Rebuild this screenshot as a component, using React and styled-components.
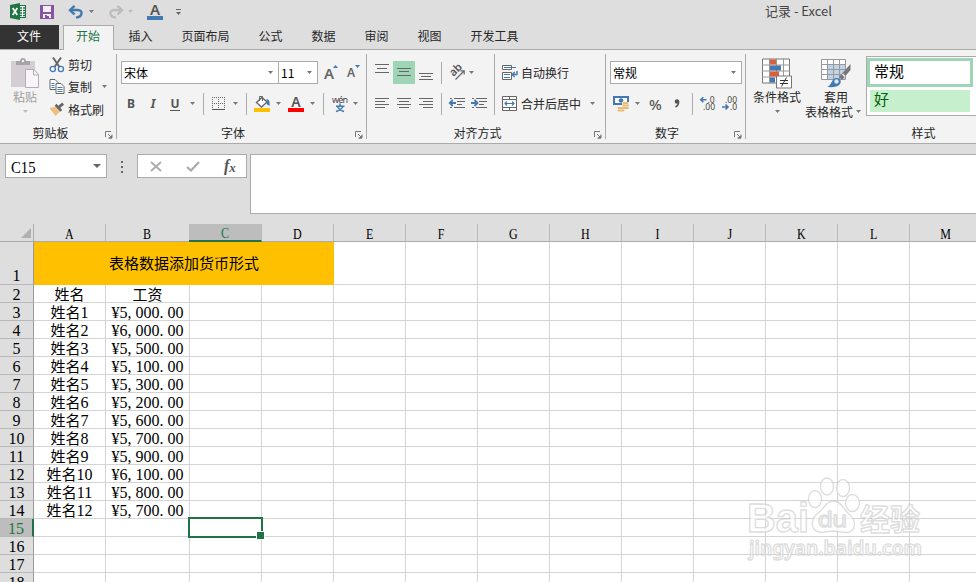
import styled, { createGlobalStyle, css } from "styled-components";

const GlobalStyle = createGlobalStyle`
  * { box-sizing: border-box; }
  body { margin: 0; overflow: hidden; }
`;

const UI = `"Noto Sans CJK SC", sans-serif`;
const SHEET = `"Liberation Serif", "Noto Sans CJK SC", serif`;

const tabs = ["插入", "页面布局", "公式", "数据", "审阅", "视图", "开发工具"];
const columns = ["A", "B", "C", "D", "E", "F", "G", "H", "I", "J", "K", "L", "M"];

const rows = [
  ["姓名", "工资"],
  ["姓名1", "¥5,000.00"],
  ["姓名2", "¥6,000.00"],
  ["姓名3", "¥5,500.00"],
  ["姓名4", "¥5,100.00"],
  ["姓名5", "¥5,300.00"],
  ["姓名6", "¥5,200.00"],
  ["姓名7", "¥5,600.00"],
  ["姓名8", "¥5,700.00"],
  ["姓名9", "¥5,900.00"],
  ["姓名10", "¥6,100.00"],
  ["姓名11", "¥5,800.00"],
  ["姓名12", "¥5,700.00"],
  ["", ""],
  ["", ""],
  ["", ""],
  ["", ""],
];

/* ---------- icons ---------- */

const ExcelIcon = () => (
  <Svg width="17" height="17" viewBox="0 0 17 17">
    <rect x="8.5" y="2.5" width="7" height="12" fill="#fff" stroke="#217346" />
    <path d="M10 5h2M13 5h2M10 7.5h2M13 7.5h2M10 10h2M13 10h2M10 12.5h2M13 12.5h2" stroke="#217346" strokeWidth="1.3" />
    <path d="M0 2L10 0V17L0 15Z" fill="#217346" />
    <path d="M2.7 5L7.3 12M7.3 5L2.7 12" stroke="#fff" strokeWidth="1.7" />
  </Svg>
);

const SaveIcon = () => (
  <Svg width="14" height="14" viewBox="0 0 14 14">
    <path d="M0 0H14V14H0Z" fill="#8653a5" />
    <path d="M3 1H11V7H3ZM3 9H11V13H9V11H7V13H3Z" fill="#f3eef6" />
    <path d="M5 10h2v3H5z" fill="#8653a5" />
  </Svg>
);

const UndoIcon = ({ color = "#4179b0", flip }) => (
  <Svg width="16" height="14" viewBox="0 0 16 14">
    <g transform={flip ? "translate(16 0) scale(-1 1)" : undefined} fill="none" stroke={color} strokeWidth="2.4">
      <path d="M6.5 0.8L2 5.2L6.5 9.3" />
      <path d="M2 5H9.5C13 5 14 7 13.4 9C13 11 11 12.3 8 12.6" />
    </g>
  </Svg>
);

const PasteIcon = () => (
  <Svg width="29" height="31" viewBox="0 0 29 31">
    <path d="M0 3H24V29H0Z" fill="#d4cdd4" />
    <path d="M5 7V3H9C9 -1 15 -1 15 3H19V7Z" fill="#a7a3a8" />
    <circle cx="12" cy="3" r="1.2" fill="#f3f3f3" />
    <path d="M14.5 11.5H23L27.5 16.5V29.5H14.5Z" fill="#f8f4f9" stroke="#b5aab8" />
    <path d="M22.5 11.5V17H27.5" fill="none" stroke="#b5aab8" />
  </Svg>
);

const CutIcon = () => (
  <Svg width="15" height="16" viewBox="0 0 15 16">
    <path d="M3.5 0.5L10 10M11.5 0.5L5 10" stroke="#666" strokeWidth="2" />
    <circle cx="3.3" cy="12" r="2.6" fill="none" stroke="#4179b0" strokeWidth="1.3" />
    <circle cx="11.4" cy="12" r="2.6" fill="none" stroke="#4179b0" strokeWidth="1.3" />
  </Svg>
);

const CopyIcon = () => (
  <Svg width="15" height="15" viewBox="0 0 15 15">
    <path d="M0.5 0.5H5.5L8.5 3.5V10.5H0.5Z" fill="#fff" stroke="#666" />
    <path d="M2 4.5h3M2 6.5h3M2 8.5h3" stroke="#4179b0" />
    <path d="M6.5 4.5H11.5L14.5 7.5V14.5H6.5Z" fill="#fff" stroke="#666" />
    <path d="M8 8.5h5M8 10.5h5M8 12.5h5" stroke="#4179b0" />
  </Svg>
);

const BrushIcon = () => (
  <Svg width="17" height="15" viewBox="0 0 17 15">
    <path d="M0.500 6L6.500 4.500L11.500 10L7 14.500Z" fill="#eec07c" />
    <path d="M6 3.500L8 1.500L14 8L12 10Z" fill="#666" />
    <path d="M10.500 5L15 1.200" stroke="#666" strokeWidth="3" />
  </Svg>
);

const BorderIcon = () => (
  <Svg width="14" height="14" viewBox="0 0 14 14">
    <path d="M0 .5H13M0 6.5H13M.5 0V13M6.5 0V13M12.5 0V13" stroke="#666" strokeDasharray="1 1" />
    <path d="M0 12.5H13" stroke="#555" />
  </Svg>
);

const FillIcon = () => (
  <Svg width="16" height="17" viewBox="0 0 16 17">
    <path d="M2.5 7.5L8 2.5L13 7L7.5 12Z" fill="#fff" stroke="#666" strokeWidth="1.3" />
    <path d="M5.5 6V1.5H8.5V6" fill="none" stroke="#666" />
    <path d="M12.5 4C15.5 4.5 16 7 15.5 11L12.5 9Z" fill="#4179b0" />
    <path d="M0 13H16V17H0Z" fill="#ffc000" />
  </Svg>
);

const PinyinIcon = () => (
  <Svg width="17" height="18" viewBox="0 0 17 18">
    <text x="0" y="8" fontFamily="Noto Sans" fontSize="9" fill="#444" textLength="16">wén</text>
    <path d="M8 8.5V11M4 11.2H12.5M5.5 11.5Q7 15 12 16.5M11 11.5Q9 15 4 16.5" fill="none" stroke="#4179b0" strokeWidth="1.5" />
  </Svg>
);

// lines: list of [x1, x2, y]
const LinesIcon = ({ lines }) => (
  <Svg width="14" height="23" viewBox="0 0 14 23">
    {lines.map(([a, b, y]) => (
      <path key={y} d={`M${a} ${y}.5H${b}`} stroke="#666" />
    ))}
  </Svg>
);

const OrientIcon = () => (
  <Svg width="17" height="16" viewBox="0 0 17 16">
    <text x="0" y="0" transform="translate(4.5 12) rotate(-45)" fontFamily="Noto Sans" fontSize="11" fontWeight="600" fill="#555">ab</text>
    <path d="M6.5 14.5L15 6M11.5 5.8H15.2V9.5" fill="none" stroke="#666" strokeWidth="1.2" />
  </Svg>
);

const IndentIcon = ({ right }) => (
  <Svg width="16" height="12" viewBox="0 0 16 12">
    <path d="M1 .5H3M5 .5H16M8 3.5H16M8 6.5H13M1 9.5H3M5 9.5H16" stroke="#666" />
    {right ? (
      <path d="M0 5H6M3.5 2L6.5 5L3.5 8" fill="none" stroke="#4179b0" strokeWidth="1.8" />
    ) : (
      <path d="M7 5H1M3.7 2L.8 5L3.7 8" fill="none" stroke="#4179b0" strokeWidth="1.8" />
    )}
  </Svg>
);

const WrapIcon = () => (
  <Svg width="16" height="16" viewBox="0 0 16 16">
    <path d="M.5 .5H9.5V4.5H.5ZM.5 7.5H9.5V14.5H.5Z" fill="#fff" stroke="#666" />
    <path d="M2 2.5H14M2 9.5H8M2 12.5H8" stroke="#4179b0" />
    <path d="M15 6V9.5H10.5M12.7 7L10.2 9.5L12.7 12" fill="none" stroke="#4179b0" strokeWidth="1.4" />
  </Svg>
);

const MergeIcon = () => (
  <Svg width="16" height="16" viewBox="0 0 16 16">
    <path d="M.5 .5H14.5V14.5H.5ZM.5 3.5H14.5M.5 11.5H14.5M7.5 .5V3.5M7.5 11.5V14.5" fill="#fff" stroke="#666" />
    <path d="M3 7.5H12M5 5.5L3 7.5L5 9.5M10 5.5L12 7.5L10 9.5" fill="none" stroke="#4179b0" strokeWidth="1.2" />
  </Svg>
);

const MoneyIcon = () => (
  <Svg width="17" height="16" viewBox="0 0 17 16">
    <path d="M1 1H15V8H1Z" fill="#fff" stroke="#4179b0" strokeWidth="2" />
    <circle cx="8" cy="4.5" r="2.3" fill="#4179b0" />
    <path d="M9 6H16V15H9Z" fill="#f3f3f3" />
    <path d="M10.5 7H14.500M10 9.5H15M10 12H15M5.500 12H9M5.500 14.5H10.500" stroke="#eabb76" strokeWidth="2" strokeLinecap="round" />
  </Svg>
);

const DecimalIcon = ({ less }) => (
  <Svg width="16" height="15" viewBox="0 0 16 15">
    <text x={less ? 3 : 7.5} y="6.5" fontFamily="Noto Sans" fontSize="8.5" fill="#444">{less ? ".00" : ".0"}</text>
    <text x={less ? 8 : 3} y="14" fontFamily="Noto Sans" fontSize="8.5" fill="#444">{less ? ".0" : ".00"}</text>
    {less ? (
      <path d="M0 11H5.5M3.5 8.5L6 11L3.5 13.5" fill="none" stroke="#4179b0" strokeWidth="1.6" />
    ) : (
      <path d="M6.5 3.8H1M3.3 1.3L.8 3.8L3.3 6.3" fill="none" stroke="#4179b0" strokeWidth="1.6" />
    )}
  </Svg>
);

const ConditionalIcon = () => (
  <Svg width="30" height="30" viewBox="0 0 30 30">
    <path d="M.5 .5H27.5V24.5H.5Z" fill="#fff" stroke="#777" />
    <path d="M0 6.5H28M0 12.5H28M0 18.5H28M7.5 0V25M14.5 0V25M21.5 0V25" stroke="#999" />
    <path d="M8 1H14V6H8ZM8 13H17V18H8Z" fill="#d9603c" />
    <path d="M8 7H19V12H8ZM8 19H13V24H8Z" fill="#4179b0" />
    <path d="M14.5 17.5H29.5V29.5H14.5Z" fill="#fff" stroke="#777" />
    <path d="M18 22H26M18 25H26M24.5 19L19.5 28" stroke="#333" />
  </Svg>
);

const TableFormatIcon = () => (
  <Svg width="30" height="29" viewBox="0 0 30 29">
    <path d="M.5 .5H24.5V20.5H.5Z" fill="#fff" />
    <path d="M7 6H24V20H7Z" fill="#bfd2e8" />
    <path d="M.5 .5H24.5V20.5H.5ZM0 5.5H25M0 10.5H25M0 15.5H25M6.5 0V21M12.5 0V21M18.5 0V21" fill="none" stroke="#999" />
    <path d="M29.5 5V11L21 21L18 18Z" fill="#777" />
    <path d="M21.5 15L24 17.5" stroke="#f3f3f3" strokeWidth="1.5" />
    <path d="M6 28C11 26.5 10 20 15 19C19 18.5 21 22 19 25C17 28 12 28.5 6 28Z" fill="#4179b0" />
    <circle cx="15.5" cy="22.5" r="2.2" fill="#dbe7f3" />
  </Svg>
);

const LauncherIcon = () => (
  <Svg width="8" height="8" viewBox="0 0 8 8">
    <path d="M.5 6V.5H6M3 3L6 6M7 3.5V7H3.5" fill="none" stroke="#777" />
    <path d="M7 4V7.5H3.5Z" fill="#777" />
  </Svg>
);

const Arrow = ({ $ml, color = "#777" }) => (
  <Item $ml={$ml} $w={5}>
    <Svg width="5" height="3" viewBox="0 0 5 3"><path d="M0 0H5L2.5 3Z" fill={color} /></Svg>
  </Item>
);

const Watermark = () => (
  <WatermarkSvg width="190" height="95" viewBox="740 475 190 95">
    <g fill="#fff" fillOpacity="0.6" stroke="#c8c8c8" strokeOpacity="0.6" strokeWidth="1.4" strokeLinejoin="round">
      <ellipse cx="815" cy="499" rx="6.5" ry="8.5" />
      <ellipse cx="827" cy="486.5" rx="6.5" ry="8.5" />
      <ellipse cx="843" cy="488" rx="6.5" ry="8.5" />
      <ellipse cx="852.5" cy="503" rx="7" ry="8.5" />
      <path d="M834 501C841 501 843 509 849 514C856 520 857 530 848 532.5C842 533 838 531 833 531C827 531 824 533 819 532C810 530 811 519 817 514C824 509 826 501 834 501Z" />
      <text x="747" y="532" fontFamily="Liberation Sans" fontWeight="700" fontSize="41" textLength="62" lengthAdjust="spacingAndGlyphs">Bai</text>
      <text x="818" y="527" fontFamily="Liberation Sans" fontWeight="400" fontSize="22" textLength="29" lengthAdjust="spacingAndGlyphs">du</text>
      <text x="860" y="530" fontFamily="Noto Sans CJK SC" fontWeight="700" fontSize="30" textLength="60">经验</text>
      <text x="749" y="555" fontFamily="Noto Sans" fontWeight="600" fontSize="20" textLength="173" lengthAdjust="spacingAndGlyphs">jingyan.baidu.com</text>
    </g>
  </WatermarkSvg>
);

/* ---------- parts ---------- */

const Group = ({ width, title, shift = 17, launcher = true, children }) => (
  <RibbonGroup $w={width}>
    {children}
    <GroupFooter $shift={shift}>
      <span>{title}</span>
      {launcher && <Launcher><LauncherIcon /></Launcher>}
    </GroupFooter>
  </RibbonGroup>
);

// punctuation takes the same advance as a digit
const Half = ({ value }) =>
  value.split(/([,.])/).map((part, i) => (i % 2 ? <Punct key={i}>{part}</Punct> : part));

const CellText = ({ value }) => (
  <span>
    {value.split(/([¥\d,.]+)/).filter(Boolean).map((part) =>
      /\d/.test(part) ? <Digits key={part}><Half value={part} /></Digits> : part
    )}
  </span>
);

export default function App() {
  return (
    <Window>
      <GlobalStyle />
      <TitleBar>
        <Item $ml={10} $w={17}><ExcelIcon /></Item>
        <Item $ml={13} $w={14}><SaveIcon /></Item>
        <Item $ml={14} $w={16}><UndoIcon /></Item>
        <Arrow $ml={5} />
        <Item $ml={14} $w={16}><UndoIcon color="#bdbdbd" flip /></Item>
        <Arrow $ml={4} color="#bdbdbd" />
        <Item $ml={14} $w={16}><FontColor $bar="#4179b0" $size={15}>A</FontColor></Item>
        <Item $ml={13} $w={5}>
          <Svg width="5" height="6" viewBox="0 0 5 6"><path d="M0 0H5V1H0ZM0 3H5L2.5 6Z" fill="#666" /></Svg>
        </Item>
        <DocTitle>记录 - Excel</DocTitle>
      </TitleBar>

      <TabBar>
        <FileTab>文件</FileTab>
        <ActiveTab>开始</ActiveTab>
        {tabs.map((t) => <Tab key={t}>{t}</Tab>)}
      </TabBar>

      <Ribbon>
        <Group width={117} title="剪贴板" shift={15}>
          <Clipboard>
            <BigButton $w={36} $muted>
              <PasteIcon />
              <Label>粘贴</Label>
              <Arrow color="#bbb" />
            </BigButton>
            <SmallButtons>
              <SmallButton><CutIcon /><Label>剪切</Label></SmallButton>
              <SmallButton><CopyIcon /><Label>复制</Label><Arrow $ml={7} /></SmallButton>
              <SmallButton><BrushIcon /><Label>格式刷</Label></SmallButton>
            </SmallButtons>
          </Clipboard>
        </Group>

        <Group width={250} title="字体">
          <ToolRow $top={7}>
            <ComboBox $ml={4} $w={158}>宋体<Arrow /></ComboBox>
            <ComboBox $ml={-1} $w={40}>11<Arrow /></ComboBox>
            <Item $ml={6} $w={14}>
              <GlyphA $size={15}>A</GlyphA>
              <Tip width="5" height="3" viewBox="0 0 5 3"><path d="M0 3H5L2.5 0Z" fill="#4179b0" /></Tip>
            </Item>
            <Item $ml={8} $w={14}>
              <GlyphA $size={12}>A</GlyphA>
              <Tip width="5" height="3" viewBox="0 0 5 3"><path d="M0 0H5L2.5 3Z" fill="#4179b0" /></Tip>
            </Item>
          </ToolRow>
          <ToolRow $top={8}>
            <Item $ml={9} $w={10}><Letter>B</Letter></Item>
            <Item $ml={12} $w={10}><Letter $italic>I</Letter></Item>
            <Item $ml={12} $w={10}><Letter $underline>U</Letter></Item>
            <Arrow $ml={10} />
            <Divider $ml={8} />
            <Item $ml={8} $w={14}><BorderIcon /></Item>
            <Arrow $ml={7} />
            <Divider $ml={8} />
            <Item $ml={7} $w={16}><FillIcon /></Item>
            <Arrow $ml={6} />
            <Item $ml={7} $w={16}><FontColor $bar="#f00" $size={14}>A</FontColor></Item>
            <Arrow $ml={6} />
            <Divider $ml={8} />
            <Item $ml={8} $w={17}><PinyinIcon /></Item>
            <Arrow $ml={4} />
          </ToolRow>
        </Group>

        <Group width={239} title="对齐方式">
          <AlignPanel>
            <div>
              <ToolRow $top={7}>
                <Item $ml={8} $w={14}><LinesIcon lines={[[0, 14, 3], [2, 12, 7], [0, 14, 11]]} /></Item>
                <Item $ml={4} $w={22} $active><LinesIcon lines={[[0, 14, 7], [2, 12, 10], [0, 14, 14]]} /></Item>
                <Item $ml={4} $w={14}><LinesIcon lines={[[0, 14, 12], [2, 12, 15], [0, 14, 18]]} /></Item>
                <Divider $ml={8} />
                <Item $ml={7} $w={17}><OrientIcon /></Item>
                <Arrow $ml={3} />
              </ToolRow>
              <ToolRow $top={8}>
                <Item $ml={8} $w={14}><LinesIcon lines={[[0, 14, 6], [0, 10, 9], [0, 14, 12], [0, 10, 15]]} /></Item>
                <Item $ml={8} $w={14}><LinesIcon lines={[[0, 14, 6], [2, 12, 9], [0, 14, 12], [2, 12, 15]]} /></Item>
                <Item $ml={8} $w={14}><LinesIcon lines={[[0, 14, 6], [4, 14, 9], [0, 14, 12], [4, 14, 15]]} /></Item>
                <Divider $ml={8} />
                <Item $ml={7} $w={16}><IndentIcon /></Item>
                <Item $ml={6} $w={16}><IndentIcon right /></Item>
              </ToolRow>
            </div>
            <WrapPanel>
              <ToolRow $top={7}>
                <Item $ml={7} $w={16}><WrapIcon /></Item>
                <Label $ml={3}>自动换行</Label>
              </ToolRow>
              <ToolRow $top={8}>
                <Item $ml={7} $w={16}><MergeIcon /></Item>
                <Label $ml={3}>合并后居中</Label>
                <Arrow $ml={9} />
              </ToolRow>
            </WrapPanel>
          </AlignPanel>
        </Group>

        <Group width={140} title="数字">
          <ToolRow $top={7}>
            <ComboBox $ml={4} $w={132}>常规<Arrow /></ComboBox>
          </ToolRow>
          <ToolRow $top={8}>
            <Item $ml={7} $w={17}><MoneyIcon /></Item>
            <Arrow $ml={5} />
            <Item $ml={9} $w={13}><Percent>%</Percent></Item>
            <Item $ml={11} $w={7}>
              <Svg width="6" height="9" viewBox="0 0 6 9">
                <circle cx="3" cy="2.5" r="2.3" fill="#555" />
                <path d="M4.5 2.5Q5 6 1.5 8" fill="none" stroke="#555" strokeWidth="1.5" />
              </Svg>
            </Item>
            <Divider $ml={12} />
            <Item $ml={7} $w={16}><DecimalIcon /></Item>
            <Item $ml={6} $w={16}><DecimalIcon less /></Item>
          </ToolRow>
        </Group>

        <Group width={356} title="样式" shift={0} launcher={false}>
          <StylesPanel>
            <BigButton $w={62}>
              <ConditionalIcon />
              <Label>条件格式</Label>
              <Arrow />
            </BigButton>
            <BigButton $w={56}>
              <TableFormatIcon />
              <Label>套用</Label>
              <LabelLine><Label>表格格式</Label><Arrow $ml={3} /></LabelLine>
            </BigButton>
            <Gallery>
              <StyleCard $selected>常规</StyleCard>
              <StyleCard>好</StyleCard>
            </Gallery>
          </StylesPanel>
        </Group>
      </Ribbon>

      <FormulaBar>
        <NameBox>
          <span>C15</span>
          <Svg width="8" height="4" viewBox="0 0 8 4"><path d="M0 0H8L4 4Z" fill="#666" /></Svg>
        </NameBox>
        <Dots><i /><i /><i /></Dots>
        <FxBox>
          <Svg width="12" height="11" viewBox="0 0 12 11"><path d="M1 1L11 10M11 1L1 10" stroke="#aaa" strokeWidth="1.8" /></Svg>
          <Svg width="14" height="11" viewBox="0 0 14 11"><path d="M1 6L5 9.5L13 1" fill="none" stroke="#aaa" strokeWidth="2.2" /></Svg>
          <Fx>f<sub>x</sub></Fx>
        </FxBox>
        <FormulaInput />
      </FormulaBar>

      <Sheet>
        <Corner>
          <Svg width="10" height="10" viewBox="0 0 10 10"><path d="M10 0V10H0Z" fill="#b1b1b1" /></Svg>
        </Corner>
        {columns.map((c) => (
          <ColumnHead key={c} $selected={c === "C"}><span>{c}</span></ColumnHead>
        ))}

        <RowHead $first>1</RowHead>
        <TitleCell>表格数据添加货币形式</TitleCell>
        {columns.slice(4).map((c) => <Cell key={c} />)}

        {rows.map(([name, pay], i) => {
          const n = i + 2;
          return [
            <RowHead key={n} $selected={n === 15}>{n}</RowHead>,
            <Cell key={`${n}A`}><CellText value={name} /></Cell>,
            <Cell key={`${n}B`}><CellText value={pay} /></Cell>,
            ...columns.slice(2).map((c) => (
              <Cell key={n + c}>{n === 15 && c === "C" && <Selection />}</Cell>
            )),
          ];
        })}
      </Sheet>
      <Watermark />
    </Window>
  );
}

/* ---------- styles ---------- */

const Window = styled.div`
  position: relative;
  width: 976px;
  height: 582px;
  overflow: hidden;
  background: #dedede;
  font-family: ${UI};
  font-size: 12px;
  color: #262626;
`;

const Svg = styled.svg`
  display: block;
  flex: none;
  overflow: visible;
`;

const WatermarkSvg = styled.svg`
  position: absolute;
  left: 740px;
  top: 475px;
`;

const Item = styled.div`
  position: relative;
  display: flex;
  flex: none;
  align-items: center;
  justify-content: center;
  width: ${(p) => p.$w}px;
  height: 23px;
  margin-left: ${(p) => p.$ml || 0}px;
  background: ${(p) => (p.$active ? "#9fd5b7" : "transparent")};
`;

const TitleBar = styled.div`
  display: flex;
  height: 25px;
`;

const DocTitle = styled.div`
  margin-left: 584px;
  line-height: 22px;
  font-size: 13px;
  color: #444;
  white-space: nowrap;
`;

const TabBar = styled.div`
  display: flex;
  height: 25px;
  border-bottom: 1px solid #ababab;
`;

const Tab = styled.div`
  padding: 0 14.5px;
  line-height: 22px;
  white-space: nowrap;
`;

const FileTab = styled(Tab)`
  width: 59px;
  padding: 0 17px;
  background: #333;
  color: #fff;
`;

const ActiveTab = styled(Tab)`
  width: 51px;
  height: 25px;
  margin-left: 4px;
  padding: 0 12px;
  line-height: 20px;
  border: 1px solid #ababab;
  border-bottom: 0;
  background: #f3f3f3;
  color: #217346;
`;

const Ribbon = styled.div`
  display: flex;
  height: 94px;
  padding-top: 4px;
  background: #f3f3f3;
  border-bottom: 1px solid #ababab;
`;

const RibbonGroup = styled.div`
  display: flex;
  flex: none;
  flex-direction: column;
  width: ${(p) => p.$w}px;
  height: 85px;
  border-right: 1px solid #ababab;
`;

const GroupFooter = styled.div`
  position: relative;
  margin-top: auto;
  padding-right: ${(p) => p.$shift}px;
  height: 13px;
  line-height: 14px;
  text-align: center;
`;

const Launcher = styled.div`
  position: absolute;
  right: 3px;
  top: 5px;
`;

const ToolRow = styled.div`
  display: flex;
  align-items: center;
  height: 23px;
  margin-top: ${(p) => p.$top}px;
`;

const Divider = styled.div`
  width: 1px;
  height: 22px;
  margin-left: ${(p) => p.$ml}px;
  background: #ababab;
`;

const Label = styled.span`
  margin-left: ${(p) => p.$ml || 0}px;
  line-height: 15px;
  white-space: nowrap;
`;

const Clipboard = styled.div`
  display: flex;
  padding-left: 7px;
`;

const BigButton = styled.div`
  display: flex;
  flex: none;
  flex-direction: column;
  align-items: center;
  width: ${(p) => p.$w}px;
  padding-top: 4px;
  color: ${(p) => (p.$muted ? "#a0a0a0" : "#262626")};
  & > ${Item} { height: 14px; }
  & > svg { height: 31px; }
`;

const SmallButtons = styled.div`
  display: flex;
  flex-direction: column;
  margin-left: 6px;
`;

const SmallButton = styled.div`
  display: flex;
  align-items: center;
  height: 23px;
  gap: 3px;
  & > svg { width: 16px; }
  &:first-child { height: 21px; }
`;

const ComboBox = styled.div`
  display: flex;
  align-items: center;
  justify-content: space-between;
  width: ${(p) => p.$w}px;
  height: 23px;
  margin-left: ${(p) => p.$ml}px;
  padding: 0 5px 1px 2px;
  background: #fff;
  border: 1px solid #ababab;
  color: #000;
`;

const GlyphA = styled.span`
  margin-right: 4px;
  font: 600 ${(p) => p.$size}px "Noto Sans", sans-serif;
  color: #666;
`;

const Tip = styled.svg`
  position: absolute;
  right: 0;
  top: 4px;
`;

const Letter = styled.span`
  font: 700 12px/13px "Noto Sans", sans-serif;
  color: #555;
  font-style: ${(p) => (p.$italic ? "italic" : "normal")};
  ${(p) => p.$underline && css`border-bottom: 1px solid #555;`}
`;

const FontColor = styled.span`
  width: 16px;
  height: 17px;
  border-bottom: 4px solid ${(p) => p.$bar};
  font: 600 ${(p) => p.$size}px/13px "Noto Sans", sans-serif;
  text-align: center;
  color: #555;
`;

const Percent = styled.span`
  font: 500 15px "Noto Sans", sans-serif;
  color: #555;
`;

const AlignPanel = styled.div`
  display: flex;
`;

const WrapPanel = styled.div`
  height: 61px;
  margin-left: auto;
  width: 111px;
  border-left: 1px solid #ababab;
`;

const StylesPanel = styled.div`
  display: flex;
`;

const LabelLine = styled.div`
  display: flex;
  align-items: center;
  height: 15px;
  margin-left: -6px;
`;

const Gallery = styled.div`
  flex: none;
  width: 240px;
  height: 60px;
  margin: 2px 0 0 2px;
  background: #fff;
  border: 1px solid #ababab;
`;

const StyleCard = styled.div`
  width: 100px;
  height: 22px;
  margin: 3px 0 0 3px;
  padding-left: 4px;
  font-size: 15px;
  line-height: 17px;
  color: #006100;
  background: #c6efce;
  ${(p) => p.$selected && css`
    width: 106px;
    height: 29px;
    margin: 1px 0 0 0;
    line-height: 20px;
    color: #000;
    background: #fff;
    border: 3px solid #9fd5b7;
  `}
`;

const FormulaBar = styled.div`
  display: flex;
  height: 80px;
  padding: 10px 0 0 5px;
  & > * { flex: none; }
`;

const NameBox = styled.div`
  display: flex;
  align-items: center;
  justify-content: space-between;
  width: 102px;
  height: 24px;
  padding: 0 5px;
  background: #fff;
  border: 1px solid #ababab;
  font: 16px "Liberation Serif", serif;
  color: #000;
  span {
    padding-top: 3px;
    transform: scaleX(0.92);
    transform-origin: left;
  }
`;

const Dots = styled.div`
  display: flex;
  flex-direction: column;
  gap: 3px;
  width: 30px;
  padding: 7px 0 0 14px;
  i {
    width: 2px;
    height: 2px;
    background: #666;
  }
`;

const FxBox = styled.div`
  display: flex;
  align-items: center;
  width: 110px;
  height: 24px;
  padding-left: 12px;
  gap: 24px;
  background: #fff;
  border: 1px solid #ababab;
`;

const Fx = styled.span`
  font: italic 700 16px/20px "Liberation Serif", serif;
  color: #555;
  sub {
    font-size: 13px;
    line-height: 0;
    vertical-align: -1px;
  }
`;

const FormulaInput = styled.div`
  width: 740px;
  height: 60px;
  margin-left: 3px;
  background: #fff;
  border: 1px solid #ababab;
`;

const Sheet = styled.div`
  display: grid;
  grid-template-columns: 34px 72px 84px repeat(11, 72px);
  grid-template-rows: 18px 43px;
  grid-auto-rows: 18px;
  width: 1000px;
  background: #fff;
  font: 15px ${SHEET};
  color: #000;
`;

const Corner = styled.div`
  display: flex;
  align-items: flex-end;
  justify-content: flex-end;
  padding: 0 2px 3px 0;
  background: #dedede;
  border-right: 1px solid #ababab;
  border-bottom: 1px solid #ababab;
`;

const ColumnHead = styled.div`
  display: flex;
  align-items: center;
  justify-content: center;
  padding-top: 3px;
  font: 15px/15px "Liberation Serif", serif;
  background: #dedede;
  border-right: 1px solid #b8b8b8;
  border-bottom: 1px solid #ababab;
  span { transform: scaleX(0.8); }
  ${(p) => p.$selected && css`
    margin-left: -1px;
    background: #bdbdbd;
    color: #217346;
    border-bottom: 2px solid #217346;
  `}
`;

const RowHead = styled.div`
  display: flex;
  align-items: ${(p) => (p.$first ? "flex-end" : "center")};
  justify-content: center;
  font: 16px/16px "Liberation Serif", serif;
  background: #dedede;
  border-right: 1px solid #999;
  border-bottom: 1px solid #b8b8b8;
  padding-top: 2px;
  ${(p) => p.$selected && css`
    background: #bdbdbd;
    color: #217346;
    border-right: 2px solid #217346;
  `}
`;

const Cell = styled.div`
  position: relative;
  display: flex;
  align-items: center;
  justify-content: center;
  padding-top: 3px;
  line-height: 14px;
  white-space: nowrap;
  border-right: 1px solid #d4d4d4;
  border-bottom: 1px solid #d4d4d4;
`;

const TitleCell = styled.div`
  grid-column: span 4;
  display: flex;
  align-items: center;
  justify-content: center;
  padding-bottom: 3px;
  background: #ffc000;
`;

const Digits = styled.span`
  font-size: 16px;
`;

const Punct = styled.span`
  padding-right: 4px;
`;

const Selection = styled.div`
  position: absolute;
  left: -2px;
  top: -2px;
  width: 75px;
  height: 21px;
  border: 2px solid #217346;
  z-index: 1;
  &::after {
    content: "";
    position: absolute;
    right: -4px;
    bottom: -4px;
    width: 7px;
    height: 7px;
    background: #217346;
    border: 1px solid #fff;
  }
`;
